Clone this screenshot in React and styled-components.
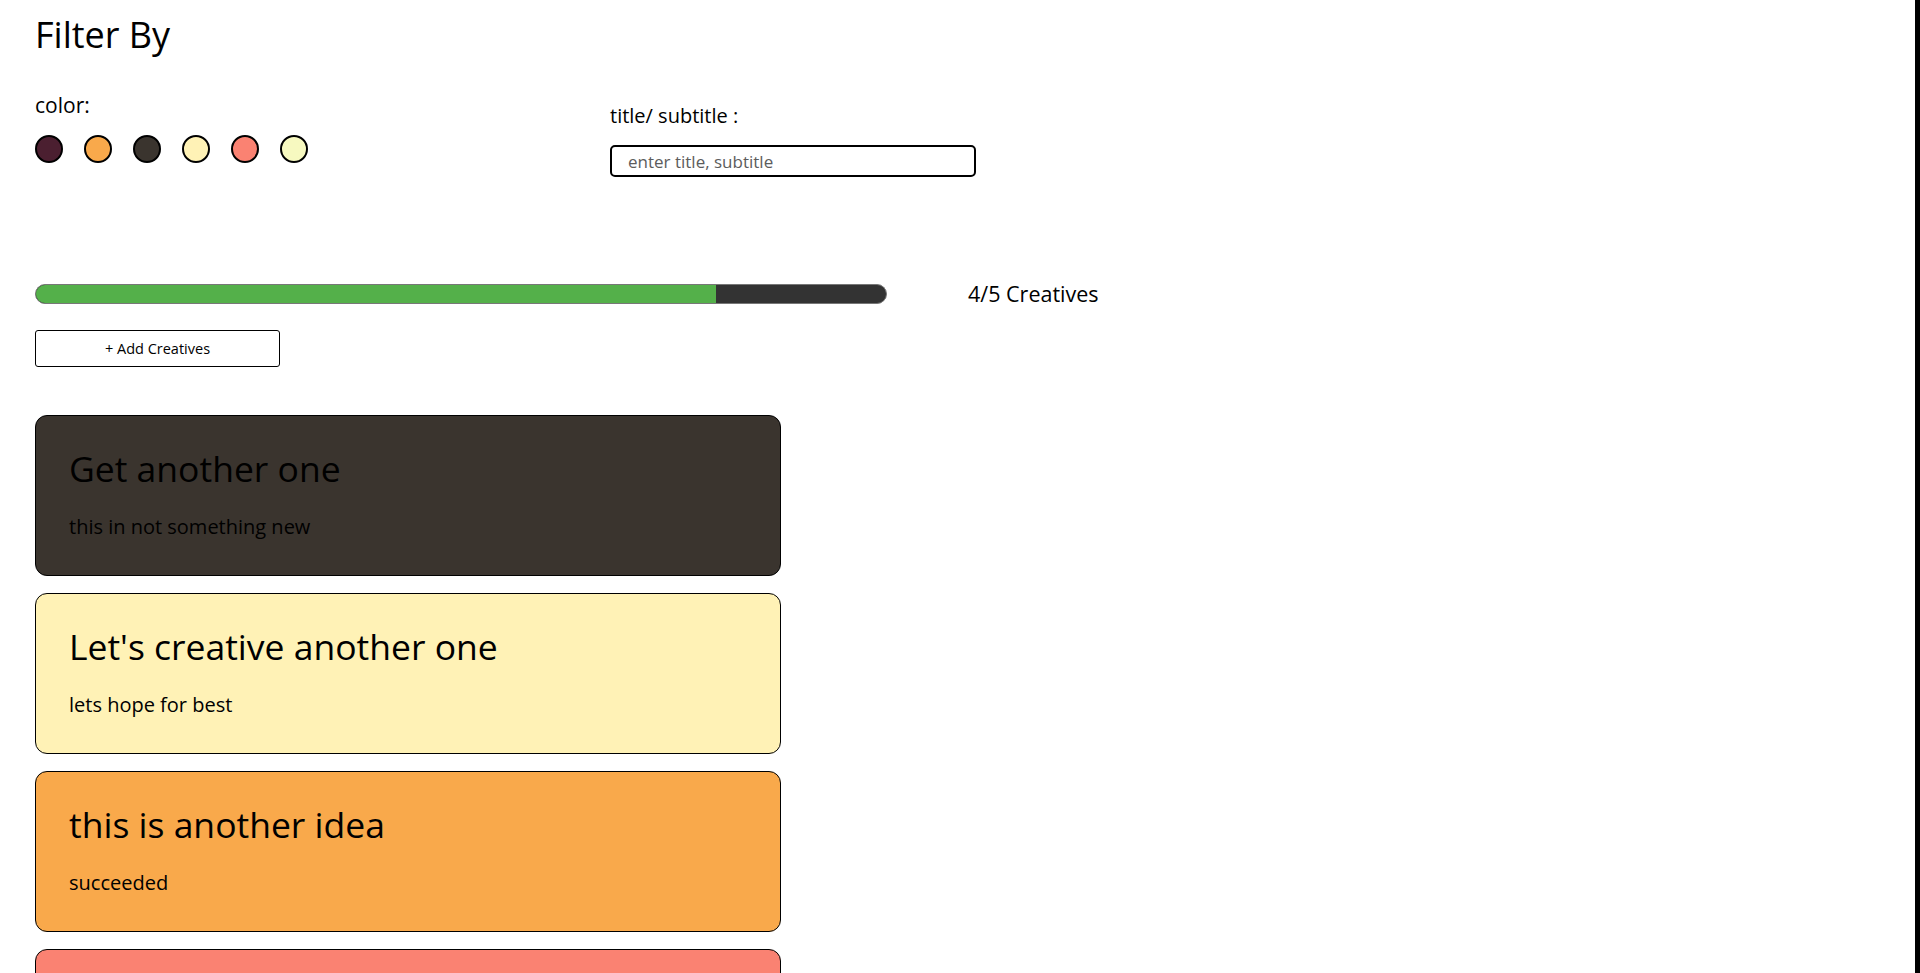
import styled, { createGlobalStyle } from "styled-components";

const GlobalStyle = createGlobalStyle`
  html, body {
    margin: 0;
    padding: 0;
    background: #ffffff;
  }
  * {
    box-sizing: border-box;
  }
  body {
    font-family: "Open Sans", "Liberation Sans", sans-serif;
    color: #000000;
  }
`;

const Page = styled.div`
  min-height: 100vh;
  padding: 12px 0 40px 35px;
  border-right: 5px solid #000000;
`;

const Heading = styled.h1`
  margin: 0;
  font-size: 36px;
  font-weight: 400;
  line-height: 46px;
`;

const FilterRow = styled.div`
  display: grid;
  grid-template-columns: 575px 366px;
  align-items: start;
  margin-top: 33px;
`;

const FilterGroup = styled.div`
  display: flex;
  flex-direction: column;
  gap: 16px;
  margin-top: ${(p) => p.$offset || 0}px;
`;

const Label = styled.label`
  font-size: ${(p) => p.$size || 21}px;
  line-height: ${(p) => p.$lh || 28}px;
`;

const Swatches = styled.div`
  display: flex;
  gap: 21px;
`;

const Swatch = styled.button`
  width: 28px;
  height: 28px;
  padding: 0;
  border-radius: 50%;
  border: 2px solid #000000;
  background: ${(p) => p.$color};
  cursor: pointer;
`;

const SearchInput = styled.input`
  width: 366px;
  height: 32px;
  border: 2px solid #000000;
  border-radius: 5px;
  padding: 0 16px;
  font-family: inherit;
  font-size: 17px;
  outline: none;
  &::placeholder {
    color: #5c5c5c;
  }
`;

const ProgressRow = styled.div`
  display: flex;
  align-items: center;
  gap: 81px;
  margin-top: 103px;
`;

const Track = styled.div`
  width: 852px;
  height: 20px;
  border: 1px solid #777777;
  border-radius: 10px;
  background: #333333;
  overflow: hidden;
`;

const Fill = styled.div`
  height: 100%;
  background: #54b04a;
`;

const Count = styled.span`
  font-size: 21.5px;
  line-height: 28px;
`;

const AddButton = styled.button`
  display: block;
  margin-top: 22px;
  width: 245px;
  height: 37px;
  border: 1px solid #000000;
  border-radius: 3px;
  background: #ffffff;
  font-family: inherit;
  font-size: 14.5px;
  color: #000000;
  cursor: pointer;
`;

const CardList = styled.div`
  display: flex;
  flex-direction: column;
  gap: 17px;
  width: 746px;
  margin-top: 48px;
`;

const Card = styled.div`
  height: 161px;
  padding: 28px 33px 0;
  border: 1px solid #000000;
  border-radius: 12px;
  background: ${(p) => p.$color};
`;

const CardTitle = styled.h2`
  margin: 0;
  font-size: 35.5px;
  font-weight: 400;
  line-height: 48px;
`;

const CardSubtitle = styled.p`
  margin: 22px 0 0;
  font-size: 20px;
  line-height: 26px;
`;

const colors = ["#4b1f30", "#f9a94b", "#3a342e", "#fff2b6", "#fa8272", "#f7f9c0"];

const creatives = [
  { title: "Get another one", subtitle: "this in not something new", color: "#3a342e" },
  { title: "Let's creative another one", subtitle: "lets hope for best", color: "#fff2b6" },
  { title: "this is another idea", subtitle: "succeeded", color: "#f9a94b" },
  { title: "first creative", subtitle: "just a start", color: "#fa8272" },
];

export default function App() {
  const done = 4;
  const total = 5;
  return (
    <>
      <GlobalStyle />
      <Page>
        <Heading>Filter By</Heading>
        <FilterRow>
          <FilterGroup>
            <Label>color:</Label>
            <Swatches>
              {colors.map((c) => (
                <Swatch key={c} type="button" $color={c} />
              ))}
            </Swatches>
          </FilterGroup>
          <FilterGroup $offset={12}>
            <Label $size={20} $lh={26}>
              title/ subtitle :
            </Label>
            <SearchInput placeholder="enter title, subtitle" />
          </FilterGroup>
        </FilterRow>
        <ProgressRow>
          <Track>
            <Fill style={{ width: `${(done / total) * 100}%` }} />
          </Track>
          <Count>
            {done}/{total} Creatives
          </Count>
        </ProgressRow>
        <AddButton type="button">+ Add Creatives</AddButton>
        <CardList>
          {creatives.map((c) => (
            <Card key={c.title} $color={c.color}>
              <CardTitle>{c.title}</CardTitle>
              <CardSubtitle>{c.subtitle}</CardSubtitle>
            </Card>
          ))}
        </CardList>
      </Page>
    </>
  );
}
